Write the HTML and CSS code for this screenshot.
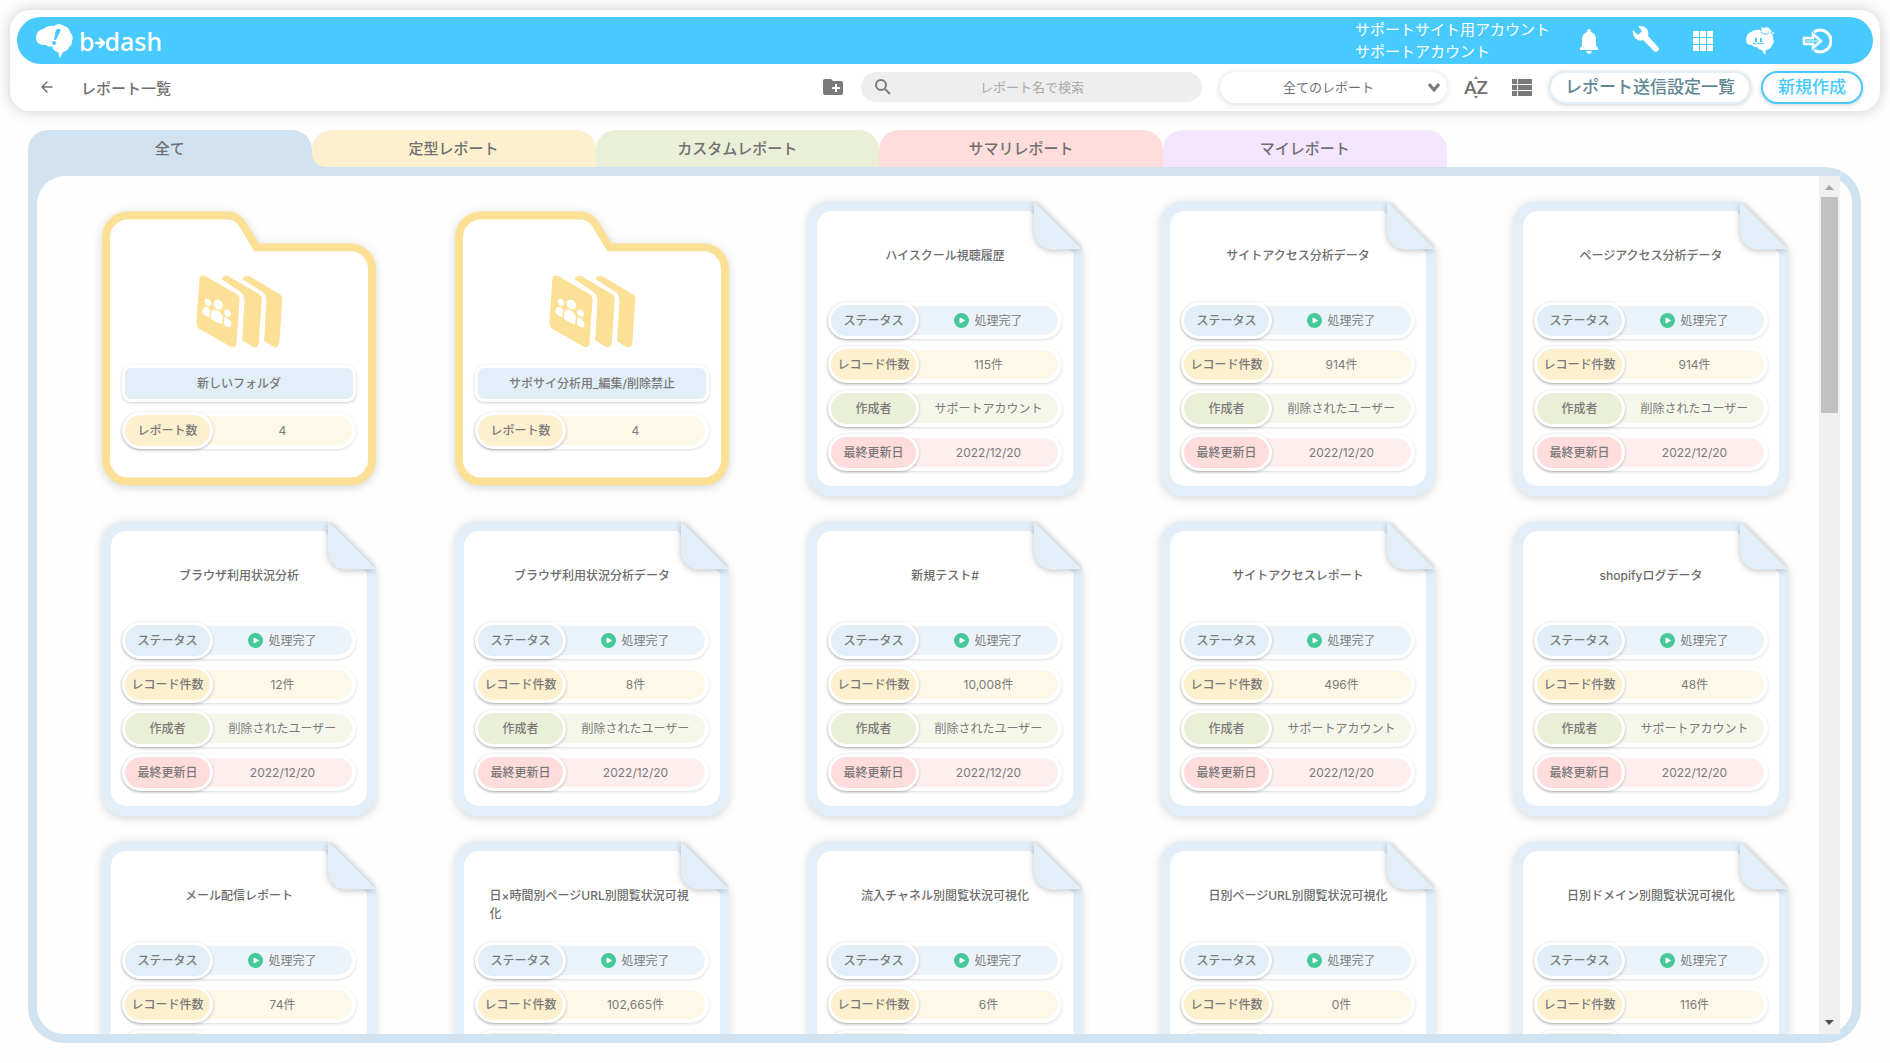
FILE: index.html
```html
<!DOCTYPE html>
<html lang="ja">
<head>
    <meta charset="UTF-8">
    <meta name="viewport" content="width=device-width, initial-scale=1.0">
    <title>レポート一覧 - b→dash</title>
    <link rel="stylesheet" href="styles.css">
</head>
<body>

<!-- 共通で使う図形 -->
<svg class="defs" width="0" height="0" aria-hidden="true">
    <symbol id="shape-file" viewBox="0 0 274 295">
        <path fill="#e2eef8" d="M22 0H226L274 48V273A22 22 0 0 1 252 295H22A22 22 0 0 1 0 273V22A22 22 0 0 1 22 0Z"/>
        <path fill="#fff" d="M24 10H222L265 52V270A15 15 0 0 1 250 285H24A15 15 0 0 1 9 270V25A15 15 0 0 1 24 10Z"/>
        <path class="fold" fill="#e2eef8" d="M226 0V28Q226 48 246 49Q260 48 274 48Z"/>
    </symbol>
    <symbol id="shape-folder" viewBox="0 0 275 275">
        <path fill="#fff" stroke="#fbe096" stroke-width="8" d="M26 4H126Q136 4 142 14L155 36H250A21 22 0 0 1 271 58V249A22 22 0 0 1 249 271H26A22 22 0 0 1 4 249V26A22 22 0 0 1 26 4Z"/>
    </symbol>
    <symbol id="icon-segments" viewBox="48 46 260 220">
        <g fill="#fbe096">
            <path d="M57 60Q59 43 75 49L168 103Q179 109 178 122L169 252Q166 267 153 263L55 207Q47 201 48 188Z"/>
            <path d="M124 58Q131 45 144 49L236 103Q246 109 245 122L236 252Q233 267 219 263L186 243L193 130Q194 107 182 98Z"/>
            <path d="M187 58Q194 45 207 49L298 103Q308 109 307 122L298 252Q295 267 281 263L252 245L259 130Q260 107 248 98Z"/>
        </g>
        <g fill="#fff">
            <ellipse cx="83" cy="129" rx="9" ry="12" transform="rotate(-30 83 129)"/>
            <ellipse cx="114" cy="135" rx="13" ry="16" transform="rotate(-35 114 135)"/>
            <ellipse cx="142" cy="161" rx="9" ry="12" transform="rotate(-30 142 161)"/>
            <path d="M66 158Q66 140 80 143Q90 147 90 154Q86 160 87 173Q66 165 66 158Z"/>
            <path d="M92 166Q94 147 108 151Q129 160 127 177L126 195Q106 189 91 177Z"/>
            <path d="M132 173Q152 178 154 195Q153 206 143 203Q131 199 131 192Z"/>
        </g>
    </symbol>
    <symbol id="icon-play" viewBox="0 0 15 15">
        <circle cx="7.500" cy="7.500" r="7.500" fill="#45c999"/>
        <path fill="#fff" stroke="#fff" stroke-linejoin="round" d="M6 5L10.500 7.500L6 10Z"/>
    </symbol>
</svg>

<header class="header">
    <div class="header-bar">
        <a href="#" class="logo">
            <svg width="38" height="36" viewBox="0 0 38 36">
                <path fill="#fff" d="M1 14Q1 8 8 6Q13 2 19 3Q24-1 29 3Q34 4 35 9Q39 13 37 18Q37 23 34 24Q33 28 28 29L25 35L23 29Q18 28 17 23Q14 25 11 22Q1 23 1 14Z"/>
                <path fill="#48caff" d="M21 7Q23 5 25 6Q26 7 25 9L21 17H19Z"/>
                <circle cx="19" cy="20" r="2" fill="#48caff"/>
            </svg>
            <span class="logo-text">b<svg width="10" height="12" viewBox="0 0 10 12"><path fill="none" stroke="#fff" stroke-width="2.500" stroke-linecap="round" stroke-linejoin="round" d="M1 6H8M5 2L9 6L5 10"/></svg>dash</span>
        </a>
        <div class="account">
            <p>サポートサイト用アカウント</p>
            <p>サポートアカウント</p>
        </div>
        <nav class="header-nav">
            <button type="button" aria-label="お知らせ">
                <svg width="30" height="30" viewBox="0 0 30 30"><path fill="#fff" d="M15 3Q17 3 17 6Q22 8 22 13V20L24 22V24H6V22L8 20V13Q8 8 13 6Q13 3 15 3ZM12 25H18Q17 28 15 28Q13 28 12 25Z"/></svg>
            </button>
            <button type="button" aria-label="設定">
                <svg width="30" height="30" viewBox="0 0 30 30"><path fill="#fff" d="M7 0Q12-1 16 3Q18 6 17 10L27 21Q29 23 27 25Q25 27 23 25L12 14Q8 16 4 12Q1 8 2 4L7 9L11 5Z"/></svg>
            </button>
            <button type="button" aria-label="メニュー">
                <svg width="30" height="30" viewBox="0 0 30 30"><path fill="#fff" d="M5 5h6v6H5zM12 5h6v6h-6zM19 5h6v6h-6zM5 12h6v6H5zM12 12h6v6h-6zM19 12h6v6h-6zM5 19h6v6H5zM12 19h6v6h-6zM19 19h6v6h-6z"/></svg>
            </button>
            <button type="button" aria-label="サポート">
                <svg width="30" height="30" viewBox="0 0 30 30">
                    <path fill="#fff" d="M1 14Q1 8 6 6Q10 3 15 4L17 6L16 1L19 2Q22 0 25 3L27 6L25 7Q29 9 28 12Q30 16 27 19Q26 23 21 24L20 29L17 24Q13 24 12 21Q8 21 7 19Q1 19 1 14Z"/>
                    <path fill="none" stroke="#48caff" d="M16 6Q20 10 24 7M8 17Q11 19 13 17Q16 19 19 17"/>
                    <path fill="#48caff" d="M10 12h2v4h-2zM15 12h2v4h-2z"/>
                    <circle cx="28" cy="7" r="1" fill="#fff"/>
                </svg>
            </button>
            <button type="button" aria-label="ログアウト">
                <svg width="30" height="30" viewBox="0 0 30 30">
                    <path fill="none" stroke="#fff" stroke-width="3" d="M12 6Q15 4 18 4A11 11 0 0 1 18 26Q15 26 12 24"/>
                    <path fill="none" stroke="#fff" stroke-width="2.500" d="M2 12H11V8L19 15L11 22V18H2Z"/>
                    <path stroke="#fff" d="M4 15H16"/>
                </svg>
            </button>
        </nav>
    </div>
    <div class="toolbar">
        <a href="#" class="back" aria-label="戻る">
            <svg width="14" height="14" viewBox="0 0 14 14"><path fill="none" stroke="#707070" stroke-width="1.500" stroke-linecap="round" stroke-linejoin="round" d="M12 7H2M7 2L2 7L7 12"/></svg>
        </a>
        <h1>レポート一覧</h1>
        <button type="button" class="icon-btn" aria-label="フォルダ作成">
            <svg width="20" height="16" viewBox="0 0 20 16"><path fill="#7a7a7a" d="M2 0H8L10 2H18Q20 2 20 4V14Q20 16 18 16H2Q0 16 0 14V2Q0 0 2 0Z"/><path stroke="#fff" stroke-width="2" d="M13 5V13M9 9H17"/></svg>
        </button>
        <div class="search">
            <svg width="18" height="18" viewBox="0 0 18 18"><path fill="none" stroke="#7a7a7a" stroke-width="2" d="M11 11L16 16"/><circle cx="7" cy="7" r="5" fill="none" stroke="#7a7a7a" stroke-width="2"/></svg>
            <input type="text" placeholder="レポート名で検索" aria-label="レポート名で検索">
        </div>
        <div class="filter">
            <select aria-label="レポートの種類">
                <option>全てのレポート</option>
            </select>
            <svg width="12" height="9" viewBox="0 0 12 9"><path fill="none" stroke="#7a7a7a" stroke-width="3" d="M1 1L6 7L11 1"/></svg>
        </div>
        <button type="button" class="icon-btn sort" aria-label="並び替え">
            <svg width="8" height="3" viewBox="0 0 8 3"><path fill="#7a7a7a" d="M2 3L4 0L6 3Z"/></svg>
            <span>AZ</span>
            <svg width="8" height="3" viewBox="0 0 8 3"><path fill="#7a7a7a" d="M2 0L4 3L6 0Z"/></svg>
        </button>
        <button type="button" class="icon-btn" aria-label="一覧表示">
            <svg width="20" height="17" viewBox="0 0 20 17"><path fill="#7a7a7a" d="M0 0h5v5H0zM6 0h14v5H6zM0 6h5v5H0zM6 6h14v5H6zM0 12h5v5H0zM6 12h14v5H6z"/></svg>
        </button>
        <button type="button" class="btn">レポート送信設定一覧</button>
        <button type="button" class="btn btn-primary">新規作成</button>
    </div>
</header>

<main class="main">
    <ul class="tabs">
        <li class="tab-all"><a href="#">全て</a></li>
        <li class="tab-fixed"><a href="#">定型レポート</a></li>
        <li class="tab-custom"><a href="#">カスタムレポート</a></li>
        <li class="tab-summary"><a href="#">サマリレポート</a></li>
        <li class="tab-my"><a href="#">マイレポート</a></li>
    </ul>
    <section class="panel">
        <div class="list" id="list"></div>
        <div class="scrollbar" aria-hidden="true">
            <svg width="21" height="21" viewBox="0 0 21 21"><path fill="#a3a3a3" d="M6 14L10 9L15 14Z"/></svg>
            <div class="thumb"></div>
            <svg width="21" height="21" viewBox="0 0 21 21"><path fill="#505050" d="M6 7L10 12L15 7Z"/></svg>
        </div>
    </section>
</main>

<script src="script.js"></script>
</body>
</html>
```
FILE: styles.css
```css
* {
    box-sizing: border-box;
}
body {
    display: flex;
    flex-direction: column;
    height: 100vh;
    margin: 0;
    padding: 10px 10px 20px;
    overflow: hidden;
    background-color: #fefefe;
    color: #707070;
    font-family: Inter, "Noto Sans CJK JP", sans-serif;
    font-size: 12px;
}
button,
input,
select {
    font-family: inherit;
    color: inherit;
}
button {
    padding: 0;
    border: none;
    background: none;
    cursor: pointer;
}
a {
    color: inherit;
    text-decoration: none;
}
svg {
    display: block;
    flex: none;
}
.defs {
    position: absolute;
}

/* ヘッダー */
.header {
    flex: none;
    padding: 7px;
    border-radius: 20px;
    background-color: #fff;
    box-shadow: 0 0 16px rgba(0, 0, 0, 0.2);
}
.header-bar {
    display: flex;
    align-items: center;
    height: 47px;
    padding: 0 41px 0 18px;
    border-radius: 24px;
    background-color: #48caff;
    color: #fff;
}
.logo {
    display: flex;
    align-items: center;
    gap: 6px;
}
.logo-text {
    display: flex;
    align-items: center;
    font-family: "Noto Sans", sans-serif;
    font-size: 25px;
    font-weight: 500;
    line-height: 36px;
}
.logo-text svg {
    margin-top: 5px;
}
.account {
    width: 210px;
    margin-left: auto;
    font-size: 15px;
    line-height: 22px;
    white-space: nowrap;
}
.account p {
    margin: 0;
}
.header-nav {
    display: flex;
    gap: 27px;
    margin-left: 9px;
}
.toolbar {
    display: flex;
    align-items: center;
    height: 40px;
    padding: 6px 10px 0 23px;
}
.toolbar h1 {
    margin: 0 auto 0 27px;
    font-size: 15px;
    font-weight: 500;
}
.search {
    display: flex;
    align-items: center;
    width: 341px;
    height: 30px;
    margin: 0 18px;
    padding: 0 30px 0 13px;
    border-radius: 15px;
    background-color: #eee;
}
.search input {
    flex: 1;
    min-width: 0;
    padding: 0;
    border: none;
    outline: none;
    background: none;
    font-size: 13px;
    text-align: center;
}
.search input::placeholder {
    color: #aaa;
}
.filter {
    position: relative;
    width: 227px;
    height: 31px;
    margin-right: 17px;
}
.filter select {
    width: 100%;
    height: 100%;
    padding: 0 26px 0 16px;
    border: none;
    border-radius: 16px;
    appearance: none;
    background-color: #fff;
    box-shadow: 0 1px 6px rgba(0, 0, 0, 0.15);
    font-size: 13px;
    text-align: center;
    text-align-last: center;
}
.filter svg {
    position: absolute;
    top: 11px;
    right: 7px;
    pointer-events: none;
}
.sort {
    display: flex;
    flex-direction: column;
    align-items: center;
    width: 24px;
    margin-right: 24px;
    font-family: Roboto, sans-serif;
    font-size: 19px;
    font-weight: 500;
    line-height: 17px;
}
.btn {
    width: 202px;
    height: 33px;
    margin-left: 17px;
    border: 2px solid #e2eef8;
    border-radius: 17px;
    background-color: #fff;
    box-shadow: 0 1px 5px rgba(0, 0, 0, 0.18);
    color: #5f8795;
    font-size: 17px;
    font-weight: 500;
    line-height: 24px;
}
.btn-primary {
    width: 102px;
    margin-left: 10px;
    border-color: #48caff;
    color: #48caff;
}

/* タブ */
.main {
    display: flex;
    flex: 1;
    flex-direction: column;
    min-height: 0;
    padding: 19px 19px 0 18px;
}
.tabs {
    display: flex;
    width: 77.4%;
    margin: 0;
    padding: 0;
    list-style: none;
}
.tabs li {
    flex: 1;
}
.tabs a {
    display: block;
    height: 37px;
    border-radius: 20px 20px 0 0;
    font-size: 15px;
    font-weight: 500;
    line-height: 38px;
    text-align: center;
}
.tab-all a {
    background-color: #d1e2f1;
}
.tab-fixed {
    background: linear-gradient(#d1e2f1, #d1e2f1) left bottom / 14px 14px no-repeat;
}
.tabs .tab-fixed a {
    border-bottom-left-radius: 14px;
    background-color: #fcf0cf;
}
.tab-custom a {
    background-color: #eaefd8;
}
.tab-summary a {
    background-color: #ffdddc;
}
.tab-my a {
    background-color: #f5e6ff;
}

/* レポート一覧 */
.panel {
    display: flex;
    flex: 1;
    min-height: 0;
    padding-right: 12px;
    border: 9px solid #d1e2f1;
    border-radius: 0 36px 36px 36px;
    background: linear-gradient(#d1e2f1, #d1e2f1) left top / 30px 30px no-repeat;
}
.list {
    display: grid;
    flex: 1;
    grid-template-columns: repeat(5, 274px);
    grid-auto-rows: 295px;
    align-items: center;
    justify-content: space-between;
    row-gap: 25px;
    padding: 25px 31px 25px 65px;
    overflow-y: auto;
    scrollbar-width: none;
    border-radius: 28px 0 0 28px;
    background-color: #fefefe;
}
.scrollbar {
    display: flex;
    flex-direction: column;
    width: 21px;
    background-color: #f0f0f0;
}
.scrollbar svg:last-child {
    margin-top: auto;
}
.thumb {
    height: 216px;
    margin: 0 2px;
    background-color: #c1c1c1;
}

/* カード */
.card {
    position: relative;
    display: flex;
    flex-direction: column;
    align-items: center;
    color: #7a7a7a;
}
.card-bg {
    position: absolute;
    top: 0;
    left: 0;
    width: 100%;
    height: 100%;
    filter: drop-shadow(0 2px 5px rgba(0, 0, 0, 0.16));
}
.fold {
    filter: drop-shadow(0 1px 3px rgba(0, 0, 0, 0.25));
}
.card-file {
    height: 295px;
}
.card-folder {
    height: 275px;
    padding-top: 64px;
}
.card-folder .icon {
    position: relative;
    width: 87px;
    height: 73px;
}
.folder-name {
    position: relative;
    width: 234px;
    margin: 17px 0 10px;
    border: 3px solid #fff;
    border-radius: 9px;
    background-color: #e2eef8;
    box-shadow: 0 1px 3px rgba(0, 0, 0, 0.2);
    font-size: 12px;
    font-weight: 500;
    line-height: 31px;
    text-align: center;
}
.card-title {
    position: relative;
    height: 55px;
    max-width: 205px;
    margin: 46px 0 0;
    color: #6c6c6c;
    font-size: 12px;
    font-weight: 500;
    line-height: 18px;
    word-break: break-all;
}
.rows {
    position: relative;
    display: flex;
    flex-direction: column;
    gap: 7px;
    width: 234px;
    margin: 0;
}
.row {
    display: flex;
    height: 37px;
    border-radius: 19px;
    background-color: #fff;
    box-shadow: 0 1px 3px rgba(0, 0, 0, 0.15);
}
.row dt {
    z-index: 1;
    width: 91px;
    border: 3px solid #fff;
    border-radius: 19px;
    box-shadow: 0 1px 3px rgba(0, 0, 0, 0.25);
    font-weight: 500;
    line-height: 31px;
    text-align: center;
    white-space: nowrap;
}
.row dd {
    display: flex;
    flex: 1;
    align-items: center;
    justify-content: center;
    gap: 5px;
    margin: 4px 4px 4px -20px;
    padding-left: 20px;
    border-radius: 0 15px 15px 0;
    line-height: 18px;
}
.row.blue dt {
    background-color: #e2eef8;
}
.row.blue dd {
    background-color: #ecf4fb;
}
.row.yellow dt {
    background-color: #fcf0cf;
}
.row.yellow dd {
    background-color: #fef8e8;
}
.row.green dt {
    background-color: #eaefd8;
}
.row.green dd {
    background-color: #f6f7eb;
}
.row.red dt {
    background-color: #ffdddc;
}
.row.red dd {
    background-color: #ffeeee;
}
```
FILE: script.js
```js
const folders = [
    { name: '新しいフォルダ', count: 4 },
    { name: 'サポサイ分析用_編集/削除禁止', count: 4 }
];

const SUPPORT = 'サポートアカウント';
const DELETED = '削除されたユーザー';

const reports = [
    { name: 'ハイスクール視聴履歴', records: '115', author: SUPPORT },
    { name: 'サイトアクセス分析データ', records: '914', author: DELETED },
    { name: 'ページアクセス分析データ', records: '914', author: DELETED },
    { name: 'ブラウザ利用状況分析', records: '12', author: DELETED },
    { name: 'ブラウザ利用状況分析データ', records: '8', author: DELETED },
    { name: '新規テスト#', records: '10,008', author: DELETED },
    { name: 'サイトアクセスレポート', records: '496', author: SUPPORT },
    { name: 'shopifyログデータ', records: '48', author: SUPPORT },
    { name: 'メール配信レポート', records: '74', author: SUPPORT },
    { name: '日×時間別ページURL別閲覧状況可視化', records: '102,665', author: SUPPORT },
    { name: '流入チャネル別閲覧状況可視化', records: '6', author: SUPPORT },
    { name: '日別ページURL別閲覧状況可視化', records: '0', author: SUPPORT },
    { name: '日別ドメイン別閲覧状況可視化', records: '116', author: SUPPORT }
];

function row(color, label, value) {
    return `<div class="row ${color}"><dt>${label}</dt><dd>${value}</dd></div>`;
}

function folderCard(folder) {
    return `
        <article class="card card-folder">
            <svg class="card-bg"><use href="#shape-folder"/></svg>
            <svg class="icon"><use href="#icon-segments"/></svg>
            <div class="folder-name">${folder.name}</div>
            <dl class="rows">${row('yellow', 'レポート数', folder.count)}</dl>
        </article>`;
}

function reportCard(report) {
    const status = '<svg width="15" height="15"><use href="#icon-play"/></svg>処理完了';
    return `
        <article class="card card-file">
            <svg class="card-bg"><use href="#shape-file"/></svg>
            <h2 class="card-title">${report.name}</h2>
            <dl class="rows">
                ${row('blue', 'ステータス', status)}
                ${row('yellow', 'レコード件数', report.records + '件')}
                ${row('green', '作成者', report.author)}
                ${row('red', '最終更新日', '2022/12/20')}
            </dl>
        </article>`;
}

document.getElementById('list').innerHTML =
    folders.map(folderCard).join('') + reports.map(reportCard).join('');
```
